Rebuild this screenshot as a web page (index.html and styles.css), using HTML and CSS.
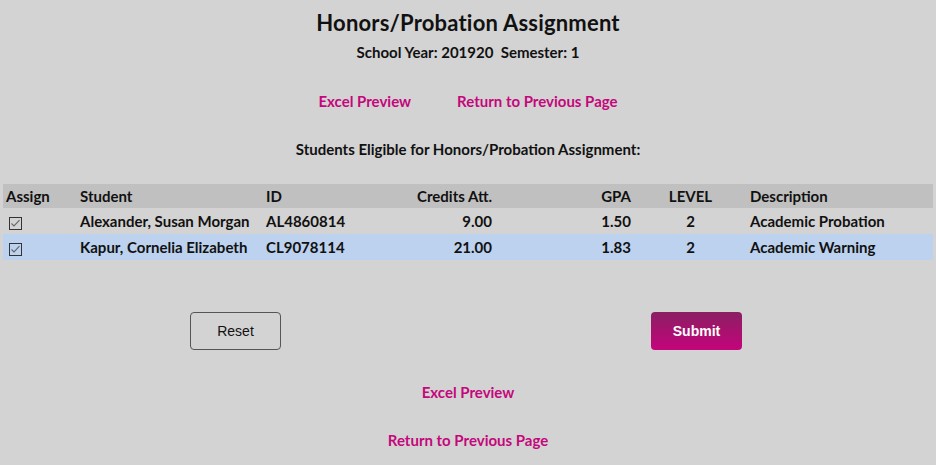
FILE: index.html
```html
<!DOCTYPE html>
<html>
<head>
<meta charset="utf-8">
<link rel="stylesheet" href="styles.css">
</head>
<body>
<div class="page">
  <h1 class="title">Honors/Probation Assignment</h1>
  <div class="subtitle">School Year: 201920&nbsp;&nbsp;Semester: 1</div>
  <div class="toplinks">
    <a class="link" href="#">Excel Preview</a>
    <a class="link" href="#">Return to Previous Page</a>
  </div>
  <div class="eligible">Students Eligible for Honors/Probation Assignment:</div>
  <table class="grid">
    <thead>
      <tr>
        <th class="c-assign">Assign</th>
        <th class="c-student">Student</th>
        <th class="c-id">ID</th>
        <th class="c-credits">Credits Att.</th>
        <th class="c-gpa">GPA</th>
        <th class="c-level">LEVEL</th>
        <th class="c-desc">Description</th>
      </tr>
    </thead>
    <tbody>
      <tr>
        <td class="c-assign"><span class="chk"><svg viewBox="0 0 13 13" width="13" height="13"><path d="M2.5 6.5 L5 9 L10.5 3.2" fill="none" stroke="#666" stroke-width="1.1"/></svg></span></td>
        <td class="c-student">Alexander, Susan Morgan</td>
        <td class="c-id">AL4860814</td>
        <td class="c-credits">9.00</td>
        <td class="c-gpa">1.50</td>
        <td class="c-level">2</td>
        <td class="c-desc">Academic Probation</td>
      </tr>
      <tr class="sel">
        <td class="c-assign"><span class="chk"><svg viewBox="0 0 13 13" width="13" height="13"><path d="M2.5 6.5 L5 9 L10.5 3.2" fill="none" stroke="#666" stroke-width="1.1"/></svg></span></td>
        <td class="c-student">Kapur, Cornelia Elizabeth</td>
        <td class="c-id">CL9078114</td>
        <td class="c-credits">21.00</td>
        <td class="c-gpa">1.83</td>
        <td class="c-level">2</td>
        <td class="c-desc">Academic Warning</td>
      </tr>
    </tbody>
  </table>
  <div class="buttons">
    <button class="btn btn-reset">Reset</button>
    <button class="btn btn-submit">Submit</button>
  </div>
  <div class="bottomlinks">
    <a class="link" href="#">Excel Preview</a>
    <a class="link" href="#">Return to Previous Page</a>
  </div>
</div>
</body>
</html>
```
FILE: styles.css
```css
html, body {
  margin: 0;
  padding: 0;
  background: #d3d3d3;
}
body {
  font-family: Lato, "Open Sans", sans-serif;
  font-weight: 700;
  color: #111;
}
.page {
  padding: 9px 3px 0 3px;
  display: flex;
  flex-direction: column;
  align-items: center;
}
.title {
  margin: 0;
  font-size: 22px;
  font-weight: 700;
  line-height: 28px;
  letter-spacing: 0.2px;
}
.subtitle {
  margin-top: 6px;
  font-size: 15px;
  line-height: 18px;
}
.toplinks {
  margin-top: 31px;
  display: flex;
  gap: 46px;
  font-size: 15px;
  line-height: 18px;
}
.link {
  color: #c4077c;
  text-decoration: none;
}
.eligible {
  margin-top: 30px;
  font-size: 15px;
  line-height: 18px;
}
.grid {
  margin-top: 26px;
  width: 100%;
  border-collapse: collapse;
  font-size: 15px;
}
.grid th, .grid td {
  padding: 0;
  height: 26px;
  text-align: left;
  font-weight: 700;
  white-space: nowrap;
}
.grid thead tr {
  background: #c0c0c0;
}
.grid th {
  height: 24px;
}
.grid tr.sel {
  background: #bcd2ee;
}
.grid .c-assign { width: 74px; padding-left: 3px; }
.c-student { width: 186px; }
.c-id { width: 100px; }
.grid .c-credits { width: 126px; text-align: right; }
.grid .c-gpa { width: 139px; text-align: right; }
.grid .c-level { width: 119px; text-align: center; }
.chk {
  display: inline-block;
  width: 11px;
  height: 11px;
  border: 1px solid #333;
  vertical-align: middle;
  margin-left: 3px;
  position: relative;
}
.chk svg {
  position: absolute;
  left: -1px;
  top: -1px;
}
.buttons {
  margin-top: 52px;
  margin-right: 4px;
  display: flex;
  gap: 370px;
}
.btn {
  width: 91px;
  height: 38px;
  border-radius: 4px;
  font-family: "Liberation Sans", Arial, sans-serif;
  font-size: 14px;
  font-weight: 400;
  cursor: pointer;
}
.btn-reset {
  background: transparent;
  border: 1px solid #555;
  color: #111;
}
.btn-submit {
  background: linear-gradient(to bottom, #8a1f62, #c4047c);
  border: 0;
  color: #fff;
  font-weight: 700;
}
.bottomlinks {
  margin-top: 33px;
  display: flex;
  flex-direction: column;
  align-items: center;
  gap: 30px;
  font-size: 15px;
  line-height: 18px;
}
```
